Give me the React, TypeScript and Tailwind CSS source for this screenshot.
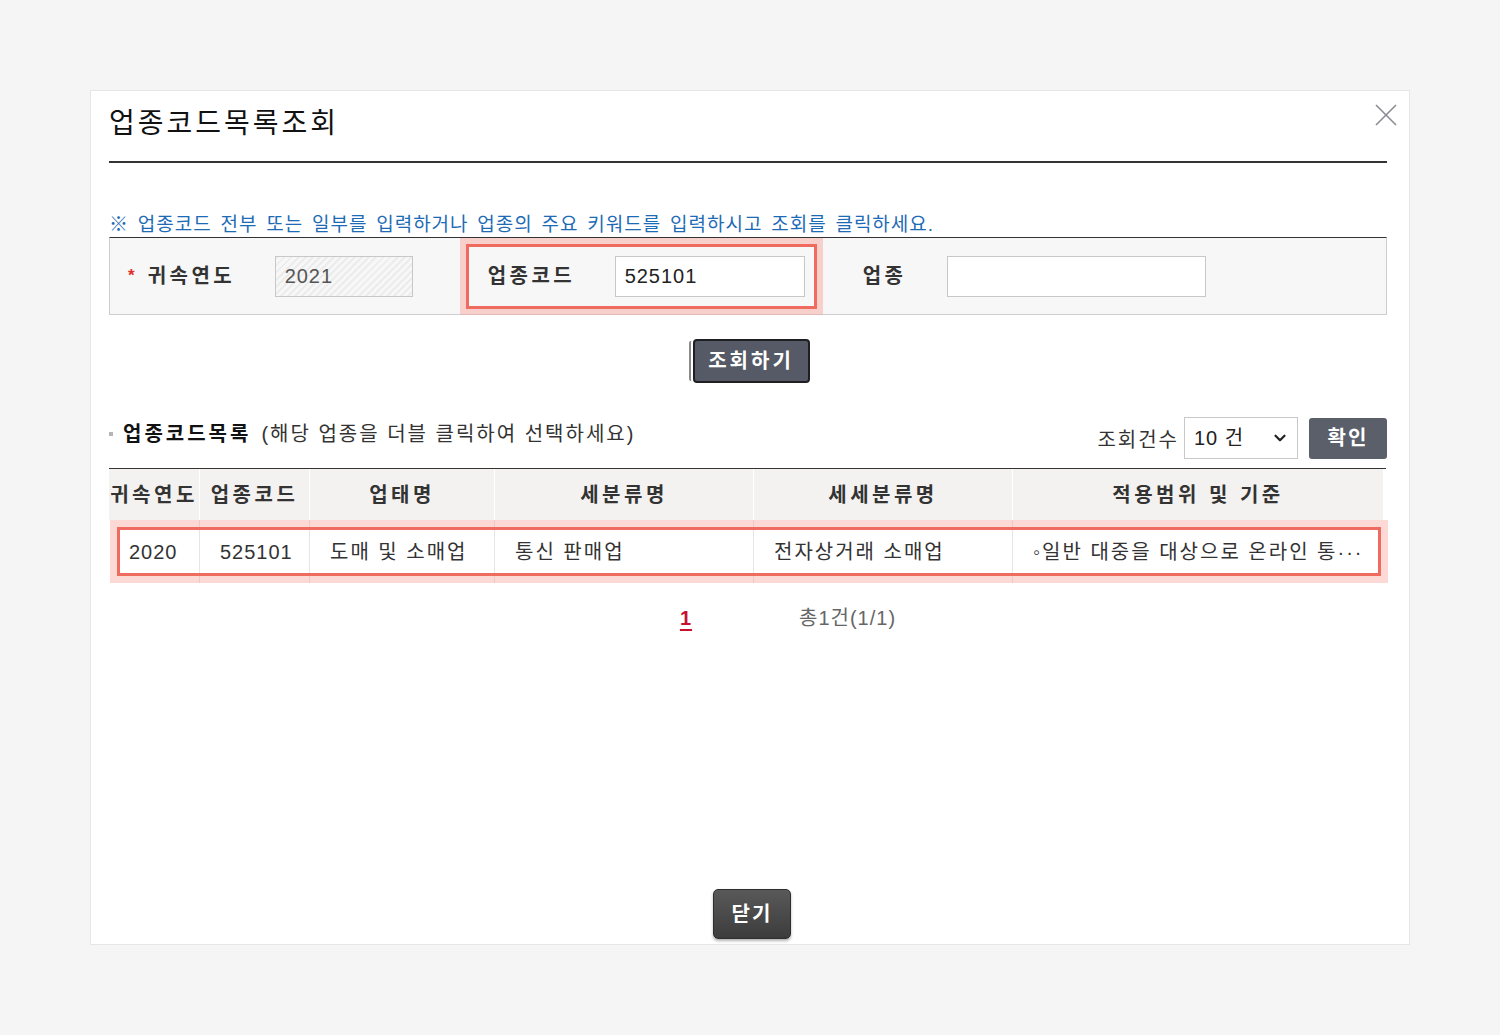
import { ChevronDown } from "lucide-react";

const FONT = "font-['Liberation_Sans','Noto_Sans_CJK_KR',sans-serif]";

const COLS = [
  { label: "귀속연도", width: "w-[91px]", value: "2020", num: true },
  { label: "업종코드", width: "w-[110px]", value: "525101", num: true },
  { label: "업태명", width: "w-[185px]", value: "도매 및 소매업", num: false },
  { label: "세분류명", width: "w-[259px]", value: "통신 판매업", num: false },
  { label: "세세분류명", width: "w-[259px]", value: "전자상거래 소매업", num: false },
  { label: "적용범위 및 기준", width: "w-[370px]", value: "◦일반 대중을 대상으로 온라인 통···", num: false },
];

function Highlight() {
  return (
    <div className="pointer-events-none absolute inset-0 border-[3px] border-[#ef6b60] shadow-[0_0_0_6px_rgba(247,160,150,0.45)]" />
  );
}

export default function App() {
  return (
    <div className={`min-h-[1035px] bg-[#f5f5f5] px-[90px] pt-[90px] ${FONT} text-[20px] tracking-[1px] text-[#333]`}>
      <div className="flex h-[855px] w-[1320px] flex-col border border-[#e6e6e6] bg-white pl-[18px]">
        {/* header */}
        <div className="flex w-[1278px] items-start">
          <h1 className="mt-[17px] flex-1 border-b-2 border-[#333] pb-[21px] text-[28px] leading-[32px] font-normal tracking-[3px] text-[#111]">
            업종코드목록조회
          </h1>
        </div>
        <button className="absolute ml-[1265px] mt-[12px] h-[24px] w-[24px] text-[#8a8a92]" aria-label="close">
          <svg viewBox="0 0 24 24" className="h-[24px] w-[24px]" stroke="currentColor" strokeWidth="1.6">
            <line x1="2" y1="2" x2="22" y2="22" />
            <line x1="22" y1="2" x2="2" y2="22" />
          </svg>
        </button>

        {/* notice */}
        <p className="mt-[50px] text-[19px] leading-[24px] tracking-[1px] [word-spacing:2.5px] text-[#1e6bb5]">
          ※ 업종코드 전부 또는 일부를 입력하거나 업종의 주요 키워드를 입력하시고 조회를 클릭하세요.
        </p>

        {/* search form */}
        <div className="flex h-[78px] w-[1278px] items-center border border-[#cfcfcf] border-t-[#333] bg-[#f7f7f7]">
          <span className="ml-[18px] text-[17px] font-bold text-[#e0302a]">*</span>
          <span className="ml-[12px] w-[127px] font-bold tracking-[3.5px]">귀속연도</span>
          <div className="flex h-[41px] w-[138px] items-center border border-[#c8c8c8] bg-[repeating-linear-gradient(135deg,#ececec_0px,#ececec_2px,#f7f7f7_2px,#f7f7f7_5px)] pl-[9px] text-[#555]">
            2021
          </div>
          <div className="relative ml-[53px] flex h-[65px] w-[351px] items-center">
            <span className="ml-[22px] w-[127px] font-bold tracking-[3.5px]">업종코드</span>
            <div className="flex h-[41px] w-[190px] items-center border border-[#c8c8c8] bg-white pl-[9px] text-[#222]">
              525101
            </div>
            <Highlight />
          </div>
          <span className="ml-[46px] w-[84px] font-bold tracking-[3.5px]">업종</span>
          <div className="h-[41px] w-[259px] border border-[#c8c8c8] bg-white" />
        </div>

        {/* search button */}
        <div className="flex w-[1278px] justify-center pl-[6px]">
          <button className="mt-[24px] h-[44px] w-[117px] rounded-[4px] border-2 border-[#1f1f22] bg-[#555a66] font-bold tracking-[3px] text-white shadow-[-2px_0_0_0_#fff,-6px_0_0_-2px_#8a8a8a]">
            조회하기
          </button>
        </div>

        {/* list header */}
        <div className="mt-[34px] flex w-[1278px] items-center">
          <div className="flex flex-1 items-center pb-[8px]">
            <span className="h-[4px] w-[4px] bg-[#b5b5b5]" />
            <span className="ml-[10px] font-bold tracking-[3px] text-[#111]">업종코드목록</span>
            <span className="ml-[10px] tracking-[2px]">(해당 업종을 더블 클릭하여 선택하세요)</span>
          </div>
          <span className="mt-[4px] mr-[5px] tracking-[2px]">조회건수</span>
          <div className="flex h-[42px] w-[114px] items-center justify-between border border-[#c8c8c8] bg-white pr-[8px] pl-[9px] text-[#222]">
            <span>10 건</span>
            <ChevronDown size={18} strokeWidth={3} className="text-[#222]" />
          </div>
          <button className="ml-[11px] h-[41px] w-[78px] rounded-[3px] bg-[#5a5f6a] font-bold tracking-[2px] text-white">
            확인
          </button>
        </div>

        {/* table */}
        <div className="mt-[9px] w-[1277px] border-t border-[#333]">
          <div className="flex h-[51px] w-[1274px] bg-[#f4f2f0] font-bold tracking-[3.5px]">
            {COLS.map((c, i) => (
              <div
                key={c.label}
                className={`${c.width} flex items-center justify-center ${i < COLS.length - 1 ? "border-r border-white" : ""}`}
              >
                {c.label}
              </div>
            ))}
          </div>
          <div className="relative flex h-[63px] w-[1274px]">
            {COLS.map((c, i) => (
              <div
                key={c.label}
                className={`${c.width} flex items-center pl-[20px] whitespace-nowrap ${c.num ? "tracking-[1px]" : "tracking-[2px]"} ${i < COLS.length - 1 ? "border-r border-[#e6e6e6]" : ""}`}
              >
                {c.value}
              </div>
            ))}
            <div className="pointer-events-none absolute top-[7px] right-[2px] bottom-[7px] left-[8px] border-[3px] border-[#ef6b60] shadow-[0_0_0_7px_rgba(247,160,150,0.4)]" />
          </div>
        </div>

        {/* pagination */}
        <div className="mt-[23px] flex w-[1278px] justify-center pl-[80px] leading-[24px]">
          <span className="font-bold text-[#c8102e] underline underline-offset-4">1</span>
          <span className="ml-[107px] text-[#666]">총1건(1/1)</span>
        </div>

        {/* close */}
        <div className="mt-auto mb-[5px] flex w-[1278px] justify-center pl-[8px]">
          <button className="h-[50px] w-[78px] rounded-[5px] border border-[#2e2e2e] bg-[linear-gradient(#595959,#3c3c3c)] font-bold tracking-[2px] text-white shadow-[0_2px_3px_rgba(0,0,0,0.3)]">
            닫기
          </button>
        </div>
      </div>
    </div>
  );
}
